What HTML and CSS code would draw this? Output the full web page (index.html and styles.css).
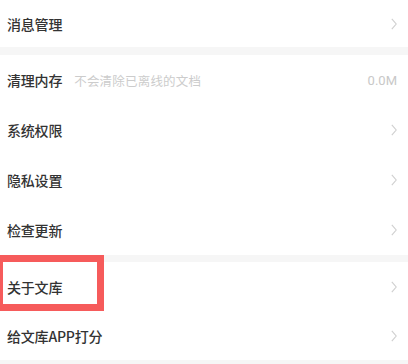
FILE: index.html
```html
<!DOCTYPE html>
<html lang="zh-CN">
<head>
<meta charset="utf-8">
<link rel="stylesheet" href="styles.css">
</head>
<body>
<div class="page">
  <div class="group">
    <div class="row first">
      <span class="label">消息管理</span>
      <svg class="chev" viewBox="0 0 6 12" width="6" height="12"><path d="M0.8 0.8 L5.2 6 L0.8 11.2" fill="none" stroke="#cfcfcf" stroke-width="1.1"/></svg>
    </div>
  </div>
  <div class="band"></div>
  <div class="group">
    <div class="row">
      <span class="label">清理内存</span>
      <span class="hint">不会清除已离线的文档</span>
      <span class="value">0.0M</span>
    </div>
    <div class="row">
      <span class="label">系统权限</span>
      <svg class="chev" viewBox="0 0 6 12" width="6" height="12"><path d="M0.8 0.8 L5.2 6 L0.8 11.2" fill="none" stroke="#cfcfcf" stroke-width="1.1"/></svg>
    </div>
    <div class="row">
      <span class="label">隐私设置</span>
      <svg class="chev" viewBox="0 0 6 12" width="6" height="12"><path d="M0.8 0.8 L5.2 6 L0.8 11.2" fill="none" stroke="#cfcfcf" stroke-width="1.1"/></svg>
    </div>
    <div class="row">
      <span class="label">检查更新</span>
      <svg class="chev" viewBox="0 0 6 12" width="6" height="12"><path d="M0.8 0.8 L5.2 6 L0.8 11.2" fill="none" stroke="#cfcfcf" stroke-width="1.1"/></svg>
    </div>
  </div>
  <div class="band thin"></div>
  <div class="group">
    <div class="row short">
      <span class="label">关于文库</span>
      <svg class="chev" viewBox="0 0 6 12" width="6" height="12"><path d="M0.8 0.8 L5.2 6 L0.8 11.2" fill="none" stroke="#cfcfcf" stroke-width="1.1"/></svg>
    </div>
    <div class="row short">
      <span class="label">给文库APP打分</span>
      <svg class="chev" viewBox="0 0 6 12" width="6" height="12"><path d="M0.8 0.8 L5.2 6 L0.8 11.2" fill="none" stroke="#cfcfcf" stroke-width="1.1"/></svg>
    </div>
  </div>
  <div class="band"></div>
  <div class="highlight"></div>
</div>
</body>
</html>
```
FILE: styles.css
```css
html, body {
  margin: 0;
  padding: 0;
  background: #ffffff;
}
.page {
  position: relative;
  width: 408px;
  height: 364px;
  overflow: hidden;
  font-family: "Noto Sans CJK SC", "Noto Sans", sans-serif;
  background: #ffffff;
}
.group {
  background: #ffffff;
}
.row {
  height: 50px;
  display: flex;
  align-items: center;
  padding: 0 11px 0 7px;
}
.row.first {
  height: 47px;
}
.row.short {
  height: 49px;
}
.label {
  font-size: 14px;
  font-weight: 500;
  color: #333333;
  letter-spacing: -0.2px;
}
.hint {
  margin-left: 12px;
  font-size: 12.5px;
  color: #cccccc;
  letter-spacing: 0.2px;
}
.value {
  margin-left: auto;
  font-size: 13px;
  color: #c8c8c8;
  font-family: "Roboto", "Noto Sans", sans-serif;
}
.chev {
  margin-left: auto;
  display: block;
}
.band {
  height: 8px;
  background: #f6f6f6;
}
.band.thin {
  height: 7px;
}
.highlight {
  position: absolute;
  left: -4px;
  top: 255px;
  width: 94px;
  height: 42px;
  border: 7px solid #f65b5b;
}
```
